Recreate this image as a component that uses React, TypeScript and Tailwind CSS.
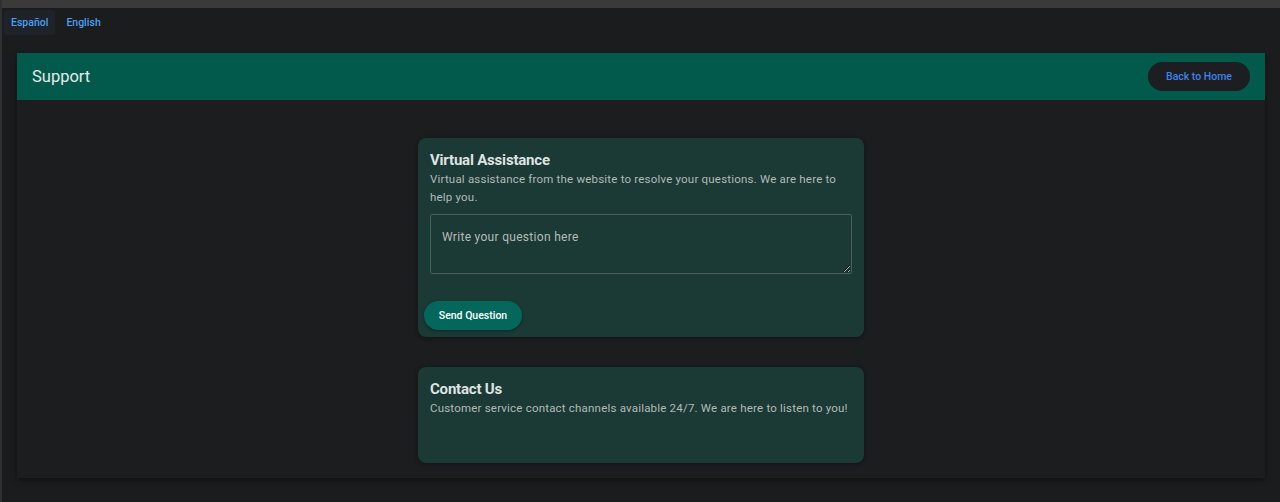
import React, { useState } from 'react';

const font = { fontFamily: 'Roboto, "Liberation Sans", sans-serif' };

export default function App() {
  const [lang, setLang] = useState<'es' | 'en'>('es');
  const [question, setQuestion] = useState('');

  return (
    <div className="min-h-[502px] bg-[#1b1c1e] border-l-2 border-[#2f3033]" style={font}>
      <div className="h-2 bg-[#3a3a3b]" />

      <div className="flex items-center gap-1 pl-[2px] pt-[2px]">
        <button onClick={() => setLang('es')}
          className={`h-[25px] px-[7px] rounded text-[10.5px] font-medium text-[#4b9ff0] ${lang === 'es' ? 'bg-[#1e2329]' : ''}`}>
          Español
        </button>
        <button onClick={() => setLang('en')}
          className={`h-[25px] px-[7px] rounded text-[10.5px] font-medium text-[#4b9ff0] ${lang === 'en' ? 'bg-[#1e2329]' : ''}`}>
          English
        </button>
      </div>

      <div className="ml-[15px] mr-[15px] mt-[18px] bg-[#1c1d1f] shadow-[0_2px_6px_rgba(0,0,0,0.45)] pb-[15px]">
        <div className="h-[47px] bg-[#015a4b] flex items-center justify-between pl-[15px] pr-[15px]">
          <h1 className="text-[16.5px] text-[#e6ebe9] pt-[1px]">Support</h1>
          <button className="h-[29px] w-[102px] rounded-full bg-[#1c1e21] text-[10.5px] font-medium text-[#3c82ee]">
            Back to Home
          </button>
        </div>

        <div className="flex flex-col items-center pt-[38px] gap-[30px]">
          <div className="w-[446px] h-[199px] rounded-lg bg-[#1b3935] shadow-[0_1px_4px_rgba(0,0,0,0.4)] pt-[12px] px-[12px] pb-[7px] flex flex-col">
            <h2 className="text-[15px] font-bold leading-[20px] text-[#dfe3e1] tracking-[-0.2px]">Virtual Assistance</h2>
            <p className="text-[11.5px] leading-[18px] text-[#b1b9b6] tracking-[0.2px]">
              Virtual assistance from the website to resolve your questions. We are here to help you.
            </p>
            <textarea
              value={question}
              onChange={(e) => setQuestion(e.target.value)}
              placeholder="Write your question here"
              className="mt-[8px] h-[60px] w-full rounded-[2px] border border-[#4b5e58] bg-transparent px-[11px] py-[12px] text-[12px] leading-[20px] tracking-[0.3px] text-[#c8d0cd] placeholder:text-[#b4bcb8] outline-none"
            />
            <div className="flex-1" />
            <button className="-ml-[6px] h-[29px] w-[98px] rounded-full bg-[#03685b] text-[10.5px] font-medium text-white shadow-[0_1px_3px_rgba(0,0,0,0.35)]">
              Send Question
            </button>
          </div>

          <div className="w-[446px] h-[96px] rounded-lg bg-[#1b3935] shadow-[0_1px_4px_rgba(0,0,0,0.4)] pt-[12px] px-[12px]">
            <h2 className="text-[15px] font-bold leading-[20px] text-[#dfe3e1] tracking-[-0.2px]">Contact Us</h2>
            <p className="text-[11.5px] leading-[18px] text-[#b1b9b6] tracking-[0.2px]">
              Customer service contact channels available 24/7. We are here to listen to you!
            </p>
          </div>
        </div>
      </div>
    </div>
  );
}
